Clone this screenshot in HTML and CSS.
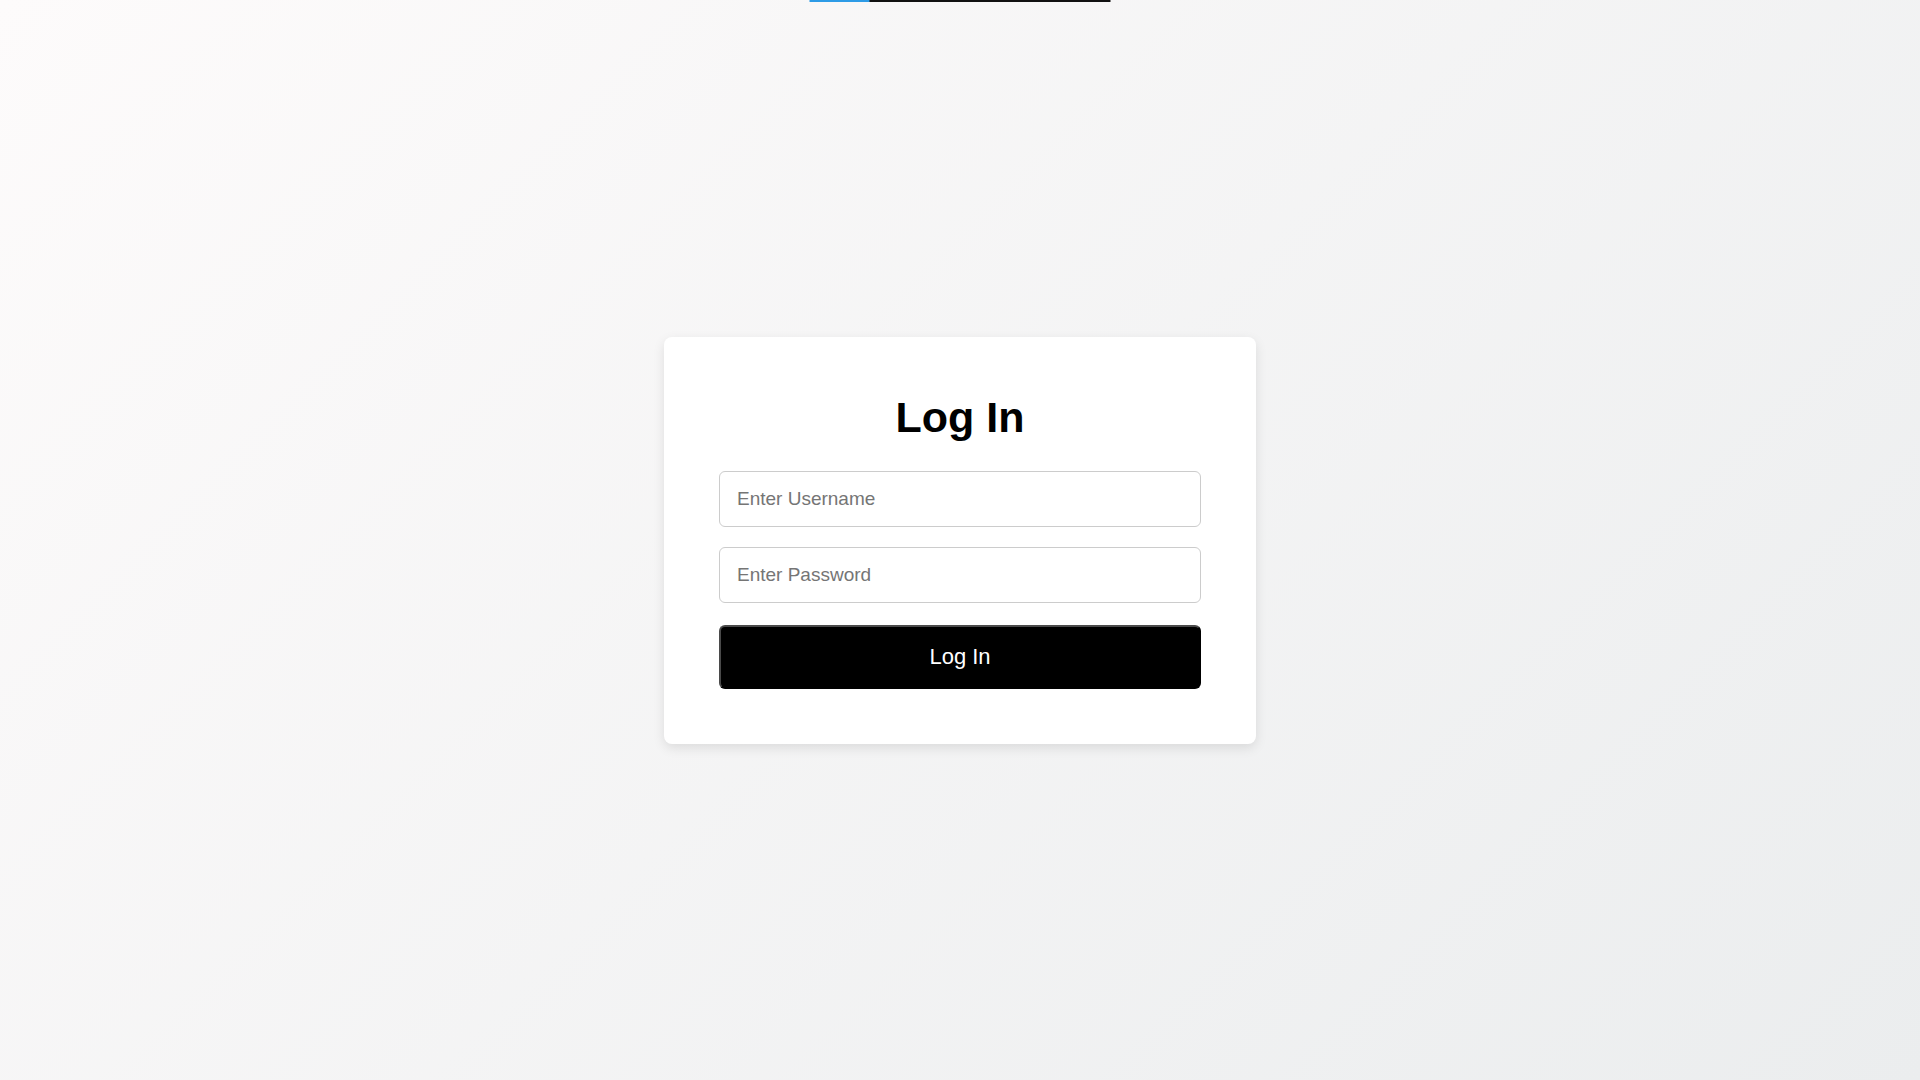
FILE: index.html
```html
<!DOCTYPE html>
<html lang="en">
<head>
    <meta charset="UTF-8">
    <meta name="viewport" content="width=device-width, initial-scale=1.0">
    <title>Log In</title>
    <link rel="stylesheet" href="styles.css">
</head>
<body>
    <div class="loader">
        <div class="loader-fill"></div>
    </div>
    <div class="container">
        <h1>Log In</h1>
        <form class="login-form">
            <input type="text" placeholder="Enter Username">
            <input type="password" placeholder="Enter Password">
            <button type="button">Log In</button>
        </form>
    </div>
</body>
</html>
```

FILE: styles.css
```css
body {
    font-family: Arial, "Liberation Sans", sans-serif;
    background: linear-gradient(135deg, #fdfbfb 0%, #ebedee 100%);
    margin: 0;
    padding: 0;
    display: flex;
    justify-content: center;
    align-items: center;
    height: 100vh;
    color: #000;
}

.loader {
    position: fixed;
    top: 0;
    left: 50%;
    transform: translateX(-50%);
    width: 301px;
    height: 2px;
    background-color: #111;
}

.loader-fill {
    width: 20%;
    height: 100%;
    background-color: #2d9be6;
}

.container {
    background: #fff;
    width: 482px;
    padding: 56px 55px 55px;
    border-radius: 8px;
    box-shadow: 0 4px 12px rgba(0, 0, 0, 0.1);
    text-align: center;
}

h1 {
    font-size: 43px;
    margin: 0 0 29px;
}

.login-form {
    display: flex;
    flex-direction: column;
    gap: 20px;
}

input {
    font-family: inherit;
    font-size: 19px;
    padding: 16px 17px;
    border: 1px solid #ccc;
    border-radius: 6px;
    outline: none;
}

input::placeholder {
    color: #757575;
}

button {
    font-family: inherit;
    font-size: 22px;
    margin-top: 2px;
    padding: 17px;
    background-color: #000;
    color: #fff;
    border: 2px solid #000;
    border-top-color: #4a4a4a;
    border-left-color: #4a4a4a;
    border-radius: 6px;
    cursor: pointer;
}

button:hover {
    background-color: #222;
}
```
